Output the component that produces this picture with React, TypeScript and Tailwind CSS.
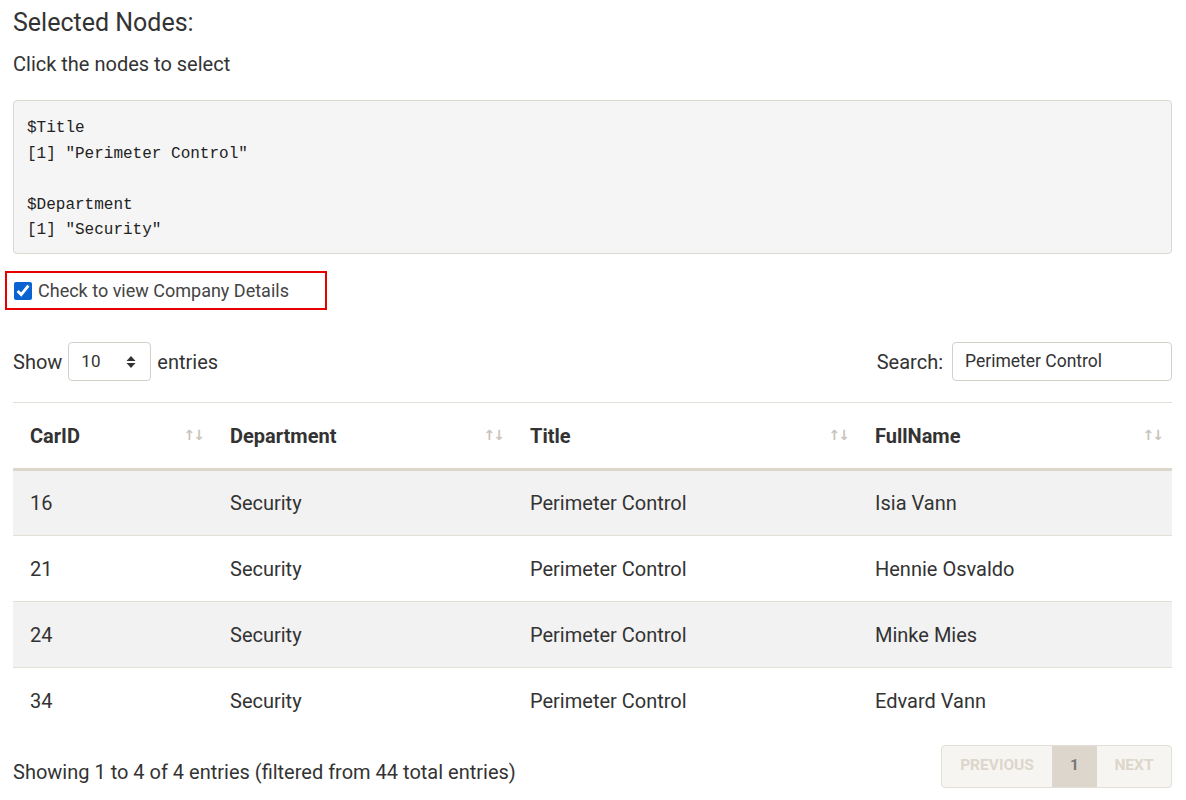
import { useState } from "react";

const rows = [
  { id: "16", dept: "Security", title: "Perimeter Control", name: "Isia Vann" },
  { id: "21", dept: "Security", title: "Perimeter Control", name: "Hennie Osvaldo" },
  { id: "24", dept: "Security", title: "Perimeter Control", name: "Minke Mies" },
  { id: "34", dept: "Security", title: "Perimeter Control", name: "Edvard Vann" },
];

const SortIcon = () => (
  <span className="text-[#c9c4bc] text-[14px] tracking-[-2px] font-['DejaVu_Sans',sans-serif]">↑↓</span>
);

const App = () => {
  const [checked, setChecked] = useState(true);
  return (
    <div className="w-[1186px] min-h-[800px] bg-white px-[13px] pt-[6px] text-[#333] font-['Roboto',sans-serif]">
      <div className="w-[1159px]">
        <h3 className="text-[25px] leading-[34px]">Selected Nodes:</h3>
        <p className="mt-[12px] text-[20px] leading-[24px]">Click the nodes to select</p>

        <pre className="mt-[24px] h-[154px] rounded border border-[#ddd8cf] bg-[#f5f5f5] px-[13px] pt-[15px] text-[16px] leading-[25.6px] text-[#222] font-['Liberation_Mono',monospace]">
          {"$Title\n[1] \"Perimeter Control\"\n\n$Department\n[1] \"Security\""}
        </pre>

        <div className="mt-[17px] -ml-[8px] inline-flex h-[39px] w-[322px] items-center border-2 border-[#e60000] pl-[7px]">
          <input
            type="checkbox"
            checked={checked}
            onChange={() => setChecked(!checked)}
            className="h-[18px] w-[18px] accent-[#0b63d1]"
          />
          <span className="ml-[6px] text-[18px] text-[#444]">Check to view Company Details</span>
        </div>

        <div className="mt-[32px] flex items-center justify-between text-[20px]">
          <div className="flex items-center">
            <span>Show</span>
            <div className="ml-[6px] mr-[6px] flex h-[39px] w-[83px] items-center justify-between rounded border border-[#d4d0c9] pl-[12px] pr-[14px] text-[17px]">
              <span>10</span>
              <svg width="10" height="14" viewBox="0 0 10 14">
                <path d="M5 1 L9.5 6 H0.5 Z" fill="#333" />
                <path d="M5 13 L9.5 8 H0.5 Z" fill="#333" />
              </svg>
            </div>
            <span>entries</span>
          </div>
          <div className="flex items-center">
            <span>Search:</span>
            <div className="ml-[9px] flex h-[39px] w-[220px] items-center rounded border border-[#d4d0c9] px-[12px] text-[17.5px]">
              Perimeter Control
            </div>
          </div>
        </div>

        <table className="mt-[21px] w-full border-t border-[#e3ded6] text-left text-[20px]">
          <thead>
            <tr className="h-[67px] border-b-[3px] border-[#ddd6cc]">
              {[
                ["CarID", "w-[200px]"],
                ["Department", "w-[300px]"],
                ["Title", "w-[345px]"],
                ["FullName", ""],
              ].map(([h, w]) => (
                <th key={h} className={`${w} pl-[17px] pr-[10px] font-bold`}>
                  <div className="flex items-center justify-between">
                    <span>{h}</span>
                    <SortIcon />
                  </div>
                </th>
              ))}
            </tr>
          </thead>
          <tbody>
            {rows.map((r, i) => (
              <tr
                key={r.id}
                className={`h-[66px] ${i % 2 === 0 ? "bg-[#f2f2f2]" : "bg-white"} ${i < rows.length - 1 ? "border-b border-[#e3ded6]" : ""}`}
              >
                <td className="pl-[17px]">{r.id}</td>
                <td className="pl-[17px]">{r.dept}</td>
                <td className="pl-[17px]">{r.title}</td>
                <td className="pl-[17px]">{r.name}</td>
              </tr>
            ))}
          </tbody>
        </table>

        <div className="mt-[11px] flex items-center justify-between">
          <span className="mt-[12px] text-[20px]">Showing 1 to 4 of 4 entries (filtered from 44 total entries)</span>
          <div className="flex h-[43px] overflow-hidden rounded border border-[#e3ded6] bg-[#f7f5f1] text-[15.5px] font-bold">
            <span className="flex w-[110px] items-center justify-center text-[#dcd6cc]">PREVIOUS</span>
            <span className="flex w-[45px] items-center justify-center bg-[#ddd6cc] text-[#777]">1</span>
            <span className="flex w-[74px] items-center justify-center text-[#dcd6cc]">NEXT</span>
          </div>
        </div>
      </div>
    </div>
  );
};

export default App;
